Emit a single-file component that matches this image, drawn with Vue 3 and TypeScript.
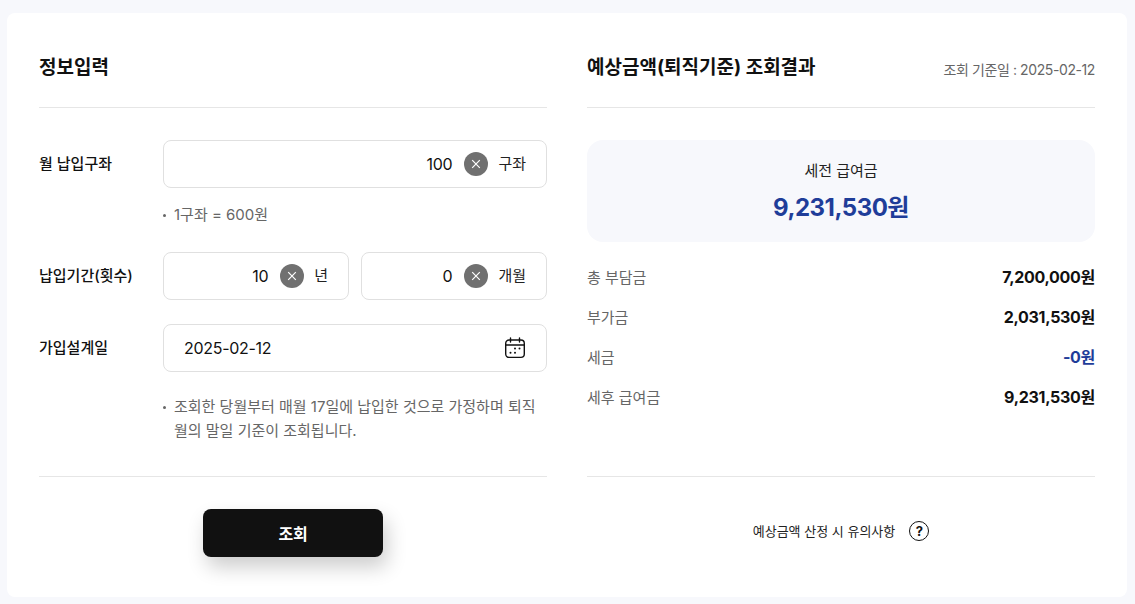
<script setup lang="ts">
const rows = [
  { label: '총 부담금', value: '7,200,000원', blue: false },
  { label: '부가금', value: '2,031,530원', blue: false },
  { label: '세금', value: '-0원', blue: true },
  { label: '세후 급여금', value: '9,231,530원', blue: false },
]
</script>

<template>
  <div class="page">
    <main class="card">
      <section class="col">
        <header class="head">
          <h2>정보입력</h2>
        </header>
        <div class="body form">
          <div class="row">
            <label>월 납입구좌</label>
            <div class="inputs">
              <div class="field">
                <span class="val">100</span>
                <span class="clear"><svg viewBox="0 0 24 24" width="24" height="24"><circle cx="12" cy="12" r="12" fill="#707070"/><path d="M8.2 8.2l7.6 7.6M15.8 8.2l-7.6 7.6" stroke="#fff" stroke-width="1.2" fill="none"/></svg></span>
                <span class="unit">구좌</span>
              </div>
            </div>
          </div>
          <p class="note note-one">1구좌 = 600원</p>
          <div class="row row-period">
            <label>납입기간(횟수)</label>
            <div class="inputs">
              <div class="field">
                <span class="val">10</span>
                <span class="clear"><svg viewBox="0 0 24 24" width="24" height="24"><circle cx="12" cy="12" r="12" fill="#707070"/><path d="M8.2 8.2l7.6 7.6M15.8 8.2l-7.6 7.6" stroke="#fff" stroke-width="1.2" fill="none"/></svg></span>
                <span class="unit">년</span>
              </div>
              <div class="field">
                <span class="val">0</span>
                <span class="clear"><svg viewBox="0 0 24 24" width="24" height="24"><circle cx="12" cy="12" r="12" fill="#707070"/><path d="M8.2 8.2l7.6 7.6M15.8 8.2l-7.6 7.6" stroke="#fff" stroke-width="1.2" fill="none"/></svg></span>
                <span class="unit">개월</span>
              </div>
            </div>
          </div>
          <div class="row row-date">
            <label>가입설계일</label>
            <div class="inputs">
              <div class="field date">
                <span class="val">2025-02-12</span>
                <svg class="cal" viewBox="0 0 22 22" width="22" height="22" fill="none" stroke="#111" stroke-width="1.4">
                  <rect x="1.7" y="3" width="18.6" height="17.4" rx="3.4"/>
                  <path d="M1.7 8h18.6M6.5 1v4M15.5 1v4" stroke-linecap="round"/>
                  <g fill="#111" stroke="none">
                    <circle cx="11" cy="11.6" r="1"/><circle cx="15.5" cy="11.6" r="1"/>
                    <circle cx="6.5" cy="15.8" r="1"/><circle cx="11" cy="15.8" r="1"/>
                  </g>
                </svg>
              </div>
            </div>
          </div>
          <p class="note note-two">조회한 당월부터 매월 17일에 납입한 것으로 가정하며 퇴직월의 말일 기준이 조회됩니다.</p>
        </div>
        <footer class="foot">
          <button class="submit" type="button">조회</button>
        </footer>
      </section>

      <section class="col">
        <header class="head">
          <h2>예상금액(퇴직기준) 조회결과</h2>
          <span class="base">조회 기준일 : 2025-02-12</span>
        </header>
        <div class="body">
          <div class="summary">
            <div class="sum-label">세전 급여금</div>
            <div class="sum-value">9,231,530원</div>
          </div>
          <ul class="list">
            <li v-for="r in rows" :key="r.label">
              <span class="k">{{ r.label }}</span>
              <span class="v" :class="{ blue: r.blue }">{{ r.value }}</span>
            </li>
          </ul>
        </div>
        <footer class="foot notice">
          <span>예상금액 산정 시 유의사항</span>
          <span class="help">?</span>
        </footer>
      </section>
    </main>
  </div>
</template>

<style>
html, body { margin: 0; background: #f7f8fc; }
</style>

<style scoped>
.page {
  width: 1135px;
  height: 604px;
  box-sizing: border-box;
  padding: 13px 8px 7px 7px;
  background: #f7f8fc;
  font-family: Inter, "Noto Sans CJK KR", "Noto Sans", sans-serif;
  color: #111;
  overflow: hidden;
}
.card {
  height: 584px;
  box-sizing: border-box;
  background: #fff;
  border-radius: 8px;
  padding: 0 32px;
  display: grid;
  grid-template-columns: 508px 508px;
  column-gap: 40px;
}
.col { display: flex; flex-direction: column; min-width: 0; }
.head {
  height: 95px;
  box-sizing: border-box;
  border-bottom: 1px solid #e6e6e6;
  display: flex;
  justify-content: space-between;
  align-items: flex-start;
  padding-top: 41px;
}
h2 {
  margin: 0;
  font-size: 19px;
  font-weight: 700;
  line-height: 28px;
  color: #111;
}
.base {
  font-size: 14px;
  letter-spacing: -0.4px;
  line-height: 18px;
  color: #666;
  margin-top: 7px;
}
.body {
  height: 369px;
  box-sizing: border-box;
  padding-top: 32px;
  border-bottom: 1px solid #e6e6e6;
}
.row { display: flex; align-items: center; }
.row label {
  width: 124px;
  flex: none;
  font-size: 15px;
  font-weight: 500;
  line-height: 22px;
  margin-top: -1px;
}
.inputs { flex: 1; display: flex; gap: 12px; min-width: 0; }
.field {
  flex: 1;
  height: 48px;
  box-sizing: border-box;
  border: 1px solid #e0e0e0;
  border-radius: 8px;
  display: flex;
  align-items: center;
  justify-content: flex-end;
  padding: 0 20px;
  font-size: 16px;
  letter-spacing: -0.3px;
  min-width: 0;
}
.val { color: #111; line-height: 22px; }
.clear { display: flex; margin-left: 12px; }
.unit { margin-left: 10px; font-size: 15px; letter-spacing: 0; color: #222; line-height: 22px; }
.date { justify-content: space-between; padding-right: 20px; }
.cal { display: block; }
.note {
  position: relative;
  margin: 0 0 0 124px;
  padding: 0 8px 0 11px;
  font-size: 15px;
  line-height: 24px;
  color: #666;
}
.note::before {
  content: "";
  position: absolute;
  left: 0;
  top: 11px;
  width: 3px;
  height: 3px;
  border-radius: 50%;
  background: #666;
}
.note-one { margin-top: 15px; }
.row-period { margin-top: 25px; }
.row-date { margin-top: 24px; }
.note-two { margin-top: 23px; word-break: break-all; }
.foot {
  flex: 1;
  display: flex;
  align-items: flex-start;
  justify-content: center;
  padding-top: 32px;
}
.submit {
  width: 180px;
  height: 48px;
  border: 0;
  border-radius: 8px;
  background: #111;
  color: #fff;
  font-family: inherit;
  font-size: 16px;
  letter-spacing: -0.3px;
  font-weight: 700;
  box-shadow: 4px 10px 20px rgba(0, 0, 0, 0.2);
}
.summary {
  height: 102px;
  box-sizing: border-box;
  background: #f7f8fc;
  border-radius: 16px;
  padding-top: 20px;
  text-align: center;
}
.sum-label { font-size: 15px; line-height: 22px; color: #222; }
.sum-value {
  margin-top: 9px;
  font-size: 24px;
  letter-spacing: -0.5px;
  line-height: 34px;
  font-weight: 700;
  color: #1f3d99;
}
.list { list-style: none; margin: 14px 0 0; padding: 0; }
.list li {
  height: 40px;
  display: flex;
  justify-content: space-between;
  align-items: center;
}
.k { font-size: 15px; color: #666; }
.v { font-size: 16px; letter-spacing: -0.3px; font-weight: 700; color: #111; }
.v.blue { color: #1f3d99; }
.notice { gap: 14px; align-items: center; padding-top: 0; padding-bottom: 13px; font-size: 13px; color: #222; }
.help {
  width: 18px;
  height: 18px;
  border: 1px solid #111;
  border-radius: 50%;
  display: flex;
  align-items: center;
  justify-content: center;
  font-size: 13px;
  font-weight: 700;
  color: #111;
}
</style>
